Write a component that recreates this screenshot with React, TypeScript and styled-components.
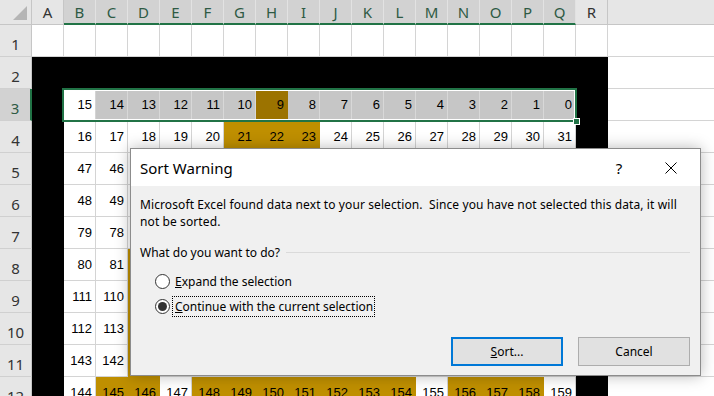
import React from "react";
import styled, { createGlobalStyle, css } from "styled-components";

const GlobalStyle = createGlobalStyle`
  html, body { margin: 0; padding: 0; background: #fff; overflow: hidden; }
  body { font-family: "Noto Sans", sans-serif; }
`;

type Fill = "white" | "black" | "gold" | "sel" | "selGold";

const fills: Record<Fill, string> = {
  white: "#ffffff",
  black: "#000000",
  gold: "#bf8f00",
  sel: "#c6c6c6",
  selGold: "#9c7300",
};

const green = "#217346";

const Page = styled.div`
  position: relative;
  width: 714px;
  height: 396px;
  overflow: hidden;
`;

const Sheet = styled.div`
  display: grid;
  grid-template-columns: 32px repeat(18, 32px) 1fr;
  grid-template-rows: 25px repeat(12, 32px);
`;

const Corner = styled.div`
  box-sizing: border-box;
  background: #e6e6e6;
  border-right: 1px solid #c6c6c6;
  border-bottom: 1px solid #c6c6c6;
  position: relative;

  &::after {
    content: "";
    position: absolute;
    right: 4px;
    bottom: 4px;
    border-left: 14px solid transparent;
    border-bottom: 14px solid #b5b5b5;
  }
`;

const ColHead = styled.div<{ $sel?: boolean }>`
  box-sizing: border-box;
  display: flex;
  align-items: center;
  justify-content: center;
  font-family: "Noto Sans", sans-serif;
  font-size: 15px;
  color: ${(p) => (p.$sel ? "#2e5a44" : "#333")};
  background: ${(p) => (p.$sel ? "#d2d2d2" : "#e6e6e6")};
  border-right: 1px solid ${(p) => (p.$sel ? "#e2e2e2" : "#c6c6c6")};
  ${(p) =>
    p.$sel
      ? css`border-bottom: 2px solid ${green};`
      : css`border-bottom: 1px solid #c6c6c6;`}
`;

const RowHead = styled.div<{ $sel?: boolean }>`
  box-sizing: border-box;
  display: flex;
  align-items: flex-end;
  justify-content: center;
  padding-bottom: 2px;
  font-family: "Noto Sans", sans-serif;
  font-size: 15px;
  color: ${(p) => (p.$sel ? "#2e5a44" : "#333")};
  background: ${(p) => (p.$sel ? "#d2d2d2" : "#e6e6e6")};
  border-bottom: 1px solid #d0d0d0;
  ${(p) =>
    p.$sel
      ? css`border-right: 2px solid ${green};`
      : css`border-right: 1px solid #c6c6c6;`}
`;

const Cell = styled.div<{ $fill: Fill }>`
  box-sizing: border-box;
  display: flex;
  align-items: center;
  justify-content: flex-end;
  padding: 0 3px 1px 0;
  font-family: "Liberation Sans", Arial, sans-serif;
  font-size: 13px;
  color: #000;
  background: ${(p) => fills[p.$fill]};
  border-right: 1px solid
    ${(p) => (p.$fill === "white" ? "#d4d4d4" : p.$fill === "sel" ? "#d8d8d8" : fills[p.$fill])};
  border-bottom: 1px solid
    ${(p) => (p.$fill === "white" ? "#d4d4d4" : fills[p.$fill])};
`;

const Rest = styled.div`
  box-sizing: border-box;
  background: #fff;
  border-bottom: 1px solid #d4d4d4;
`;

const RestHead = styled.div`
  box-sizing: border-box;
  background: #e6e6e6;
  border-bottom: 1px solid #c6c6c6;
`;

const Selection = styled.div`
  position: absolute;
  left: 62px;
  top: 88px;
  width: 515px;
  height: 34px;
  box-sizing: border-box;
  border: 2px solid ${green};
  box-shadow: inset 0 0 0 1px #fff;
  pointer-events: none;
`;

const FillHandle = styled.div`
  position: absolute;
  right: -5px;
  bottom: -5px;
  width: 5px;
  height: 5px;
  background: ${green};
  border: 1px solid #fff;
`;

/* dialog */

const Dialog = styled.div`
  position: absolute;
  left: 130px;
  top: 148px;
  width: 571px;
  height: 228px;
  box-sizing: border-box;
  border: 1px solid #8c8c8c;
  background: #f0f0f0;
  box-shadow: 0 0 14px rgba(0, 0, 0, 0.28);
  display: flex;
  flex-direction: column;
  font-family: "Noto Sans", sans-serif;
  color: #000;
`;

const TitleBar = styled.div`
  height: 37px;
  flex: none;
  background: #fff;
  display: flex;
  align-items: center;
  padding-left: 9px;
`;

const Title = styled.div`
  flex: 1;
  font-size: 15px;
`;

const Help = styled.div`
  width: 12px;
  margin-right: 40px;
  font-size: 15px;
  text-align: center;
`;

const Close = styled.div`
  width: 12px;
  height: 12px;
  margin-right: 23px;
  display: flex;
`;

const Body = styled.div`
  flex: 1;
  display: flex;
  flex-direction: column;
  padding: 10px 10px 9px 9px;
  font-size: 12px;
  line-height: 17px;
`;

const Message = styled.div`
  white-space: nowrap;
  letter-spacing: 0.1px;
`;

const Question = styled.div`
  display: flex;
  align-items: center;
  margin-top: 14px;
`;

const Rule = styled.div`
  flex: 1;
  height: 1px;
  margin-left: 6px;
  background: #dadada;
`;

const Options = styled.div`
  display: flex;
  flex-direction: column;
  gap: 5px;
  margin-top: 10px;
  padding-left: 15px;
`;

const Option = styled.div`
  display: flex;
  align-items: center;
  height: 20px;
`;

const Radio = styled.span<{ $on?: boolean }>`
  box-sizing: border-box;
  width: 15px;
  height: 15px;
  border-radius: 50%;
  border: 1px solid #333;
  background: #fff;
  display: flex;
  align-items: center;
  justify-content: center;
  margin-right: 4px;

  &::after {
    content: "";
    display: ${(p) => (p.$on ? "block" : "none")};
    width: 9px;
    height: 9px;
    border-radius: 50%;
    background: #333;
  }
`;

const Label = styled.span<{ $focus?: boolean }>`
  padding: 1px 1px 1px 2px;
  border: 1px dotted ${(p) => (p.$focus ? "#000" : "transparent")};
  margin-left: -2px;
`;

const Footer = styled.div`
  margin-top: auto;
  display: flex;
  justify-content: flex-end;
  gap: 15px;
`;

const Button = styled.div<{ $primary?: boolean }>`
  box-sizing: border-box;
  width: 112px;
  height: 29px;
  display: flex;
  align-items: center;
  justify-content: center;
  background: #e1e1e1;
  border: ${(p) => (p.$primary ? "2px solid #0078d7" : "1px solid #adadad")};
  font-size: 12px;
`;

const U = styled.span`
  text-decoration: underline;
`;

const letters = "ABCDEFGHIJKLMNOPQR".split("");

const goldCells: Record<number, number[]> = {
  4: [6, 7, 8],
  8: [3],
  9: [3],
  10: [3],
  11: [3],
  12: [2, 3, 5, 6, 7, 8, 9, 10, 11, 13, 14, 15],
};

// cells that sit fully under the dialog keep their fill but show no value
const underDialog = (row: number, col: number) => row >= 5 && row <= 11 && col >= 3;

function cellInfo(row: number, col: number): { fill: Fill; value?: number } {
  if (row === 1) return { fill: "white" };
  if (row === 2) return { fill: "black" };
  if (col === 0 || col === 17) return { fill: "black" };
  const k = row - 3;
  const i = col - 1;
  const n = k % 2 === 0 ? 16 * k + 15 - i : 16 * k + i;
  const value = underDialog(row, col) ? undefined : n;
  const gold = (goldCells[row] || []).includes(col);
  if (row === 3) {
    if (col === 1) return { fill: "white", value };
    return { fill: col === 7 ? "selGold" : "sel", value };
  }
  return { fill: gold ? "gold" : "white", value };
}

const CloseIcon = () => (
  <svg width="12" height="12" viewBox="0 0 12 12">
    <path d="M0.5 0.5 L11.5 11.5 M11.5 0.5 L0.5 11.5" stroke="#000" strokeWidth="1" />
  </svg>
);

export default function App() {
  const rows = Array.from({ length: 12 }, (_, r) => r + 1);
  return (
    <Page>
      <GlobalStyle />
      <Sheet>
        <Corner />
        {letters.map((l, c) => (
          <ColHead key={l} $sel={c >= 1 && c <= 16}>
            {l}
          </ColHead>
        ))}
        <RestHead />
        {rows.map((r) => (
          <React.Fragment key={r}>
            <RowHead $sel={r === 3}>{r}</RowHead>
            {letters.map((l, c) => {
              const info = cellInfo(r, c);
              return (
                <Cell key={l} $fill={info.fill}>
                  {info.value}
                </Cell>
              );
            })}
            <Rest />
          </React.Fragment>
        ))}
      </Sheet>

      <Selection>
        <FillHandle />
      </Selection>

      <Dialog>
        <TitleBar>
          <Title>Sort Warning</Title>
          <Help>?</Help>
          <Close>
            <CloseIcon />
          </Close>
        </TitleBar>
        <Body>
          <Message>
            Microsoft Excel found data next to your selection.&nbsp; Since you have not selected this data, it will
            <br />
            not be sorted.
          </Message>
          <Question>
            What do you want to do?
            <Rule />
          </Question>
          <Options>
            <Option>
              <Radio />
              <Label>
                <U>E</U>xpand the selection
              </Label>
            </Option>
            <Option>
              <Radio $on />
              <Label $focus>
                <U>C</U>ontinue with the current selection
              </Label>
            </Option>
          </Options>
          <Footer>
            <Button $primary>
              <span>
                <U>S</U>ort...
              </span>
            </Button>
            <Button>Cancel</Button>
          </Footer>
        </Body>
      </Dialog>
    </Page>
  );
}
